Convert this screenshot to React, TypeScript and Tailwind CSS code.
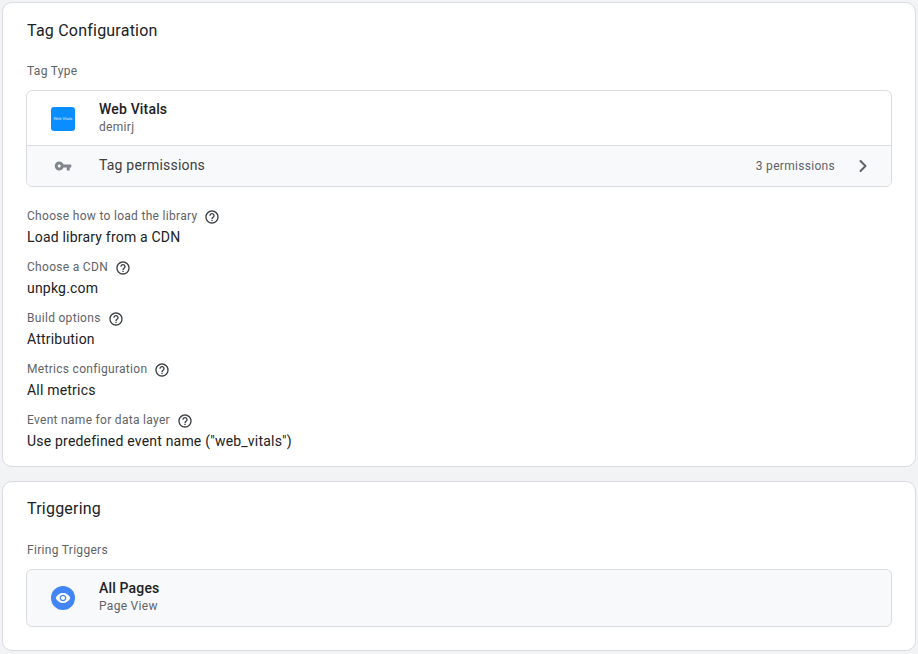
import React from 'react';
import { ChevronRight } from 'lucide-react';

const HelpIcon = () => (
  <svg width="16" height="16" viewBox="0 0 24 24" className="ml-[7px] mt-[2px] shrink-0" fill="#3c4043">
    <path d="M11 18h2v-2h-2v2zm1-16C6.48 2 2 6.48 2 12s4.48 10 10 10 10-4.48 10-10S17.52 2 12 2zm0 18c-4.41 0-8-3.59-8-8s3.59-8 8-8 8 3.59 8 8-3.59 8-8 8zm0-14c-2.21 0-4 1.79-4 4h2c0-1.1.9-2 2-2s2 .9 2 2c0 2-3 1.75-3 5h2c0-2.25 3-2.5 3-5 0-2.21-1.79-4-4-4z" />
  </svg>
);

const KeyIcon = () => (
  <svg width="18" height="18" viewBox="0 0 24 24" fill="#80868b">
    <path d="M12.65 10C11.83 7.67 9.61 6 7 6c-3.31 0-6 2.69-6 6s2.69 6 6 6c2.61 0 4.83-1.67 5.65-4H17v4h4v-4h2v-4H12.65zM7 14c-1.1 0-2-.9-2-2s.9-2 2-2 2 .9 2 2-.9 2-2 2z" />
  </svg>
);

const EyeIcon = () => (
  <svg width="16" height="16" viewBox="0 0 24 24" fill="#fff">
    <path d="M12 4.5C7 4.5 2.73 7.61 1 12c1.73 4.39 6 7.5 11 7.5s9.27-3.11 11-7.5c-1.73-4.39-6-7.5-11-7.5zM12 17c-2.76 0-5-2.24-5-5s2.24-5 5-5 5 2.24 5 5-2.24 5-5 5zm0-8c-1.66 0-3 1.34-3 3s1.34 3 3 3 3-1.34 3-3-1.34-3-3-3z" />
  </svg>
);

const fields = [
  { label: 'Choose how to load the library', value: 'Load library from a CDN' },
  { label: 'Choose a CDN', value: 'unpkg.com' },
  { label: 'Build options', value: 'Attribution' },
  { label: 'Metrics configuration', value: 'All metrics' },
  { label: 'Event name for data layer', value: 'Use predefined event name ("web_vitals")' },
];

export default function App() {
  return (
    <div className="bg-[#f1f3f4] px-[2px] pt-[2px] font-['Roboto',sans-serif] w-[918px] h-[654px] overflow-hidden">
      <section className="w-[914px] h-[465px] bg-white border border-[#dadce0] rounded-[10px] pl-[23px] pr-[23px] pt-[18px]">
        <h2 className="ml-[1px] text-[16px] leading-[20px] tracking-[0.22px] text-[#202124]">Tag Configuration</h2>
        <div className="ml-[1px] mt-[22px] text-[12px] leading-[16px] tracking-[0.3px] text-[#5f6368]">Tag Type</div>
        <div className="mt-[11px] border border-[#dadce0] rounded-[6px] overflow-hidden">
          <div className="h-[54px] flex items-center">
            <div className="w-[72px] flex justify-center pt-[2px]">
              <div className="w-[24px] h-[24px] rounded-[3px] bg-[#0a8dff] flex items-center justify-center">
                <span className="text-[4px] leading-none whitespace-nowrap text-white/80">Web Vitals</span>
              </div>
            </div>
            <div className="pb-[2px]">
              <div className="text-[14px] leading-[18px] font-medium tracking-[0.17px] text-[#202124]">Web Vitals</div>
              <div className="mt-[1px] text-[12px] leading-[16px] tracking-[0.3px] text-[#5f6368]">demirj</div>
            </div>
          </div>
          <div className="h-[41px] flex items-center border-t border-[#dadce0] bg-[#f8f9fa]">
            <div className="w-[72px] flex justify-center"><KeyIcon /></div>
            <div className="flex-1 pb-[2px] text-[14px] tracking-[0.2px] text-[#3c4043]">Tag permissions</div>
            <div className="text-[12px] tracking-[0.3px] text-[#5f6368]">3 permissions</div>
            <div className="w-[56px] flex justify-center">
              <ChevronRight size={20} strokeWidth={2.4} color="#5f6368" />
            </div>
          </div>
        </div>
        <div className="ml-[1px] mt-[21px] flex flex-col gap-[12px]">
          {fields.map((f) => (
            <div key={f.label}>
              <div className="flex items-center h-[16px]">
                <span className="text-[12px] leading-[16px] tracking-[0.3px] text-[#5f6368]">{f.label}</span>
                <HelpIcon />
              </div>
              <div className="mt-[3px] text-[14px] leading-[20px] tracking-[0.2px] text-[#202124]">{f.value}</div>
            </div>
          ))}
        </div>
      </section>
      <section className="mt-[14px] w-[914px] h-[170px] bg-white border border-[#dadce0] rounded-[10px] pl-[23px] pr-[23px] pt-[17px]">
        <h2 className="ml-[1px] text-[16px] leading-[20px] tracking-[0.22px] text-[#202124]">Triggering</h2>
        <div className="ml-[1px] mt-[23px] text-[12px] leading-[16px] tracking-[0.3px] text-[#5f6368]">Firing Triggers</div>
        <div className="mt-[11px] h-[58px] border border-[#dadce0] rounded-[6px] bg-[#f8f9fa] flex items-center">
          <div className="w-[72px] flex justify-center">
            <div className="w-[24px] h-[24px] rounded-full bg-[#4285f4] flex items-center justify-center"><EyeIcon /></div>
          </div>
          <div className="pb-[3px]">
            <div className="text-[14px] leading-[18px] font-medium tracking-[0.17px] text-[#202124]">All Pages</div>
            <div className="mt-[1px] text-[12px] leading-[16px] tracking-[0.3px] text-[#5f6368]">Page View</div>
          </div>
        </div>
      </section>
    </div>
  );
}
